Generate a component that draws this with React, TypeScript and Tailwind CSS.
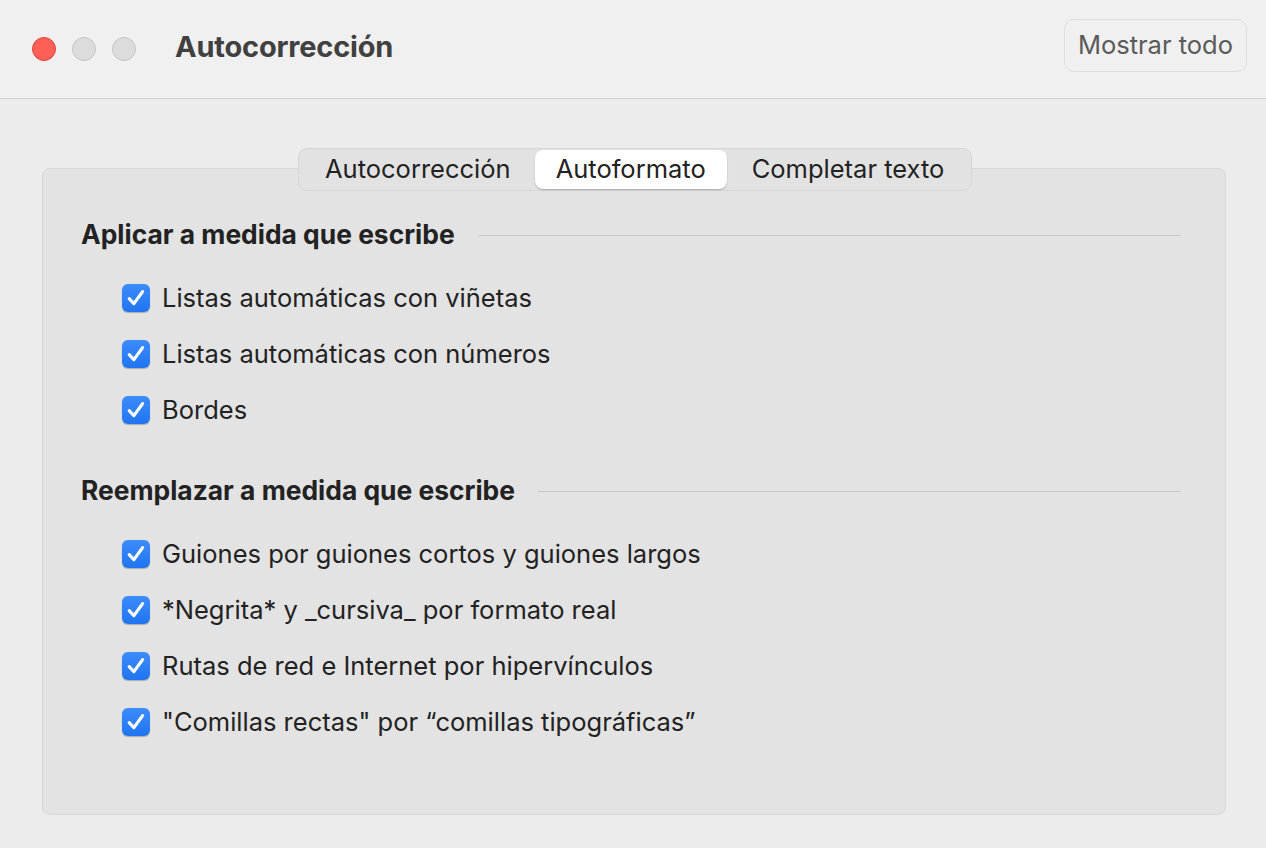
const font = { fontFamily: "Inter, 'Noto Sans', sans-serif" };

const sections = [
  {
    title: "Aplicar a medida que escribe",
    items: ["Listas automáticas con viñetas", "Listas automáticas con números", "Bordes"],
  },
  {
    title: "Reemplazar a medida que escribe",
    items: [
      "Guiones por guiones cortos y guiones largos",
      "*Negrita* y _cursiva_ por formato real",
      "Rutas de red e Internet por hipervínculos",
      "\"Comillas rectas\" por “comillas tipográficas”",
    ],
  },
];

function Check() {
  return (
    <span className="flex h-[28px] w-[28px] shrink-0 items-center justify-center rounded-[6px] bg-gradient-to-b from-[#3b8cfb] to-[#1f74f2] shadow-[0_0.5px_1px_rgba(0,0,0,0.25)]">
      <svg width="22" height="22" viewBox="0 0 22 22" fill="none">
        <path d="M4.2 11.6 L8.9 16.6 L17.6 4.6" stroke="white" strokeWidth="3.2" strokeLinecap="round" strokeLinejoin="round" />
      </svg>
    </span>
  );
}

export default function App() {
  return (
    <div className="h-[848px] w-[1266px] overflow-hidden bg-[#ececec]" style={font}>
      <div className="flex h-[99px] items-center border-b border-[#d1d1d1] bg-[#f0f0f0] pl-[32px] pr-[19px]">
        <div className="flex gap-[16px]">
          <span className="h-[24px] w-[24px] rounded-full border border-[#e0443e] bg-[#fe5f57]" />
          <span className="h-[24px] w-[24px] rounded-full border border-[#c4c4c4] bg-[#dcdcdc]" />
          <span className="h-[24px] w-[24px] rounded-full border border-[#c4c4c4] bg-[#dcdcdc]" />
        </div>
        <h1 className="ml-[39px] mb-[4px] whitespace-nowrap text-[29px] font-bold tracking-[-0.2px] text-[#404040]">Autocorrección</h1>
        <button className="ml-auto mb-[7px] h-[53px] whitespace-nowrap rounded-[10px] border border-[#dedede] bg-[#f0f0f0] px-[13px] text-[25.5px] text-[#5a5a5a]">
          Mostrar todo
        </button>
      </div>

      <div className="relative pl-[42px] pr-[40px] pt-[69px]">
        <div className="absolute left-[298px] top-[49px] z-10 flex h-[43px] items-center whitespace-nowrap rounded-[9px] border border-[#d6d6d6] bg-[#e2e2e2] p-[2px] text-[25.5px] text-[#222]">
          <span className="px-[24px]">Autocorrección</span>
          <span className="flex h-[39px] items-center rounded-[8px] bg-white px-[21px] shadow-[0_1px_1.5px_rgba(0,0,0,0.25)]">Autoformato</span>
          <span className="px-[25px]">Completar texto</span>
        </div>
        <div className="h-[647px] rounded-[8px] border border-[#d8d8d8] bg-[#e3e3e3] pl-[38px] pr-[44px] pt-[49px]">
          {sections.map((s, i) => (
            <div key={s.title} className={i > 0 ? "mt-[50px]" : ""}>
              <div className="flex h-[34px] items-center">
                <span className="whitespace-nowrap text-[26.4px] font-bold text-[#222]">{s.title}</span>
                <span className="ml-[23px] h-px flex-1 bg-[#c9c9c9]" />
              </div>
              <div className="mt-[32px] flex flex-col gap-[28px] pl-[41px]">
                {s.items.map((it) => (
                  <label key={it} className="flex h-[28px] items-center gap-[12px] whitespace-nowrap text-[25.5px] text-[#222]">
                    <Check />
                    <span>{it}</span>
                  </label>
                ))}
              </div>
            </div>
          ))}
        </div>
      </div>
    </div>
  );
}
